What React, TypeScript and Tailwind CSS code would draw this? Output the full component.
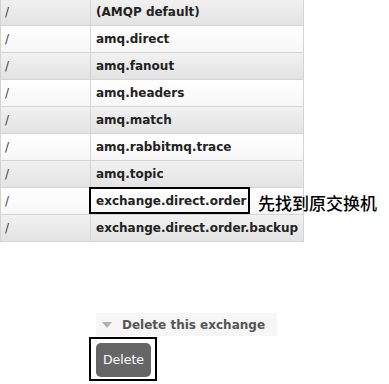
const exchanges = [
  '(AMQP default)',
  'amq.direct',
  'amq.fanout',
  'amq.headers',
  'amq.match',
  'amq.rabbitmq.trace',
  'amq.topic',
  'exchange.direct.order',
  'exchange.direct.order.backup',
];

export default function App() {
  return (
    <div className="h-[384px] w-[389px] overflow-hidden bg-white font-['DejaVu_Sans',Verdana,sans-serif] text-[12px]">
      <div className="-mt-px w-[304px] border-x border-[#d4d4d4]">
        {exchanges.map((name, i) => (
          <div
            key={name}
            className={
              'flex h-[27px] border-b border-[#d4d4d4] ' +
              (i % 2 === 0
                ? 'bg-gradient-to-b from-[#f1f1f1] to-[#e3e3e3]'
                : 'bg-gradient-to-b from-white to-[#f7f7f7]')
            }
          >
            <div className="flex w-[90px] items-center border-r border-[#d4d4d4] pl-[4px] text-[#3a3f4a]">/</div>
            <div className="relative flex flex-1 items-center pl-[5px] font-bold text-[#222]">
              {name}
              {name === 'exchange.direct.order' && (
                <>
                  <div className="absolute -left-[2px] -top-px h-[27px] w-[161px] border-2 border-black" />
                  <span className="absolute left-[167px] top-[2px] whitespace-nowrap font-['Noto_Sans_CJK_SC',sans-serif] text-[17px] font-medium text-black">
                    先找到原交换机
                  </span>
                </>
              )}
            </div>
          </div>
        ))}
      </div>

      <div className="ml-[96px] mt-[71px] flex h-[23px] w-[181px] items-center bg-[#f6f6f6] pl-[6px]">
        <span className="h-0 w-0 border-x-[5px] border-t-[6px] border-x-transparent border-t-[#b0b0b0]" />
        <span className="ml-[10px] font-bold text-[#555]">Delete this exchange</span>
      </div>

      <div className="ml-[89px] mt-px h-[44px] w-[68px] border-2 border-black pl-[5px] pt-[4px]">
        <button className="flex h-[34px] w-[55px] items-center justify-center rounded-[5px] bg-[#666] text-[12.5px] text-white">
          Delete
        </button>
      </div>
    </div>
  );
}
